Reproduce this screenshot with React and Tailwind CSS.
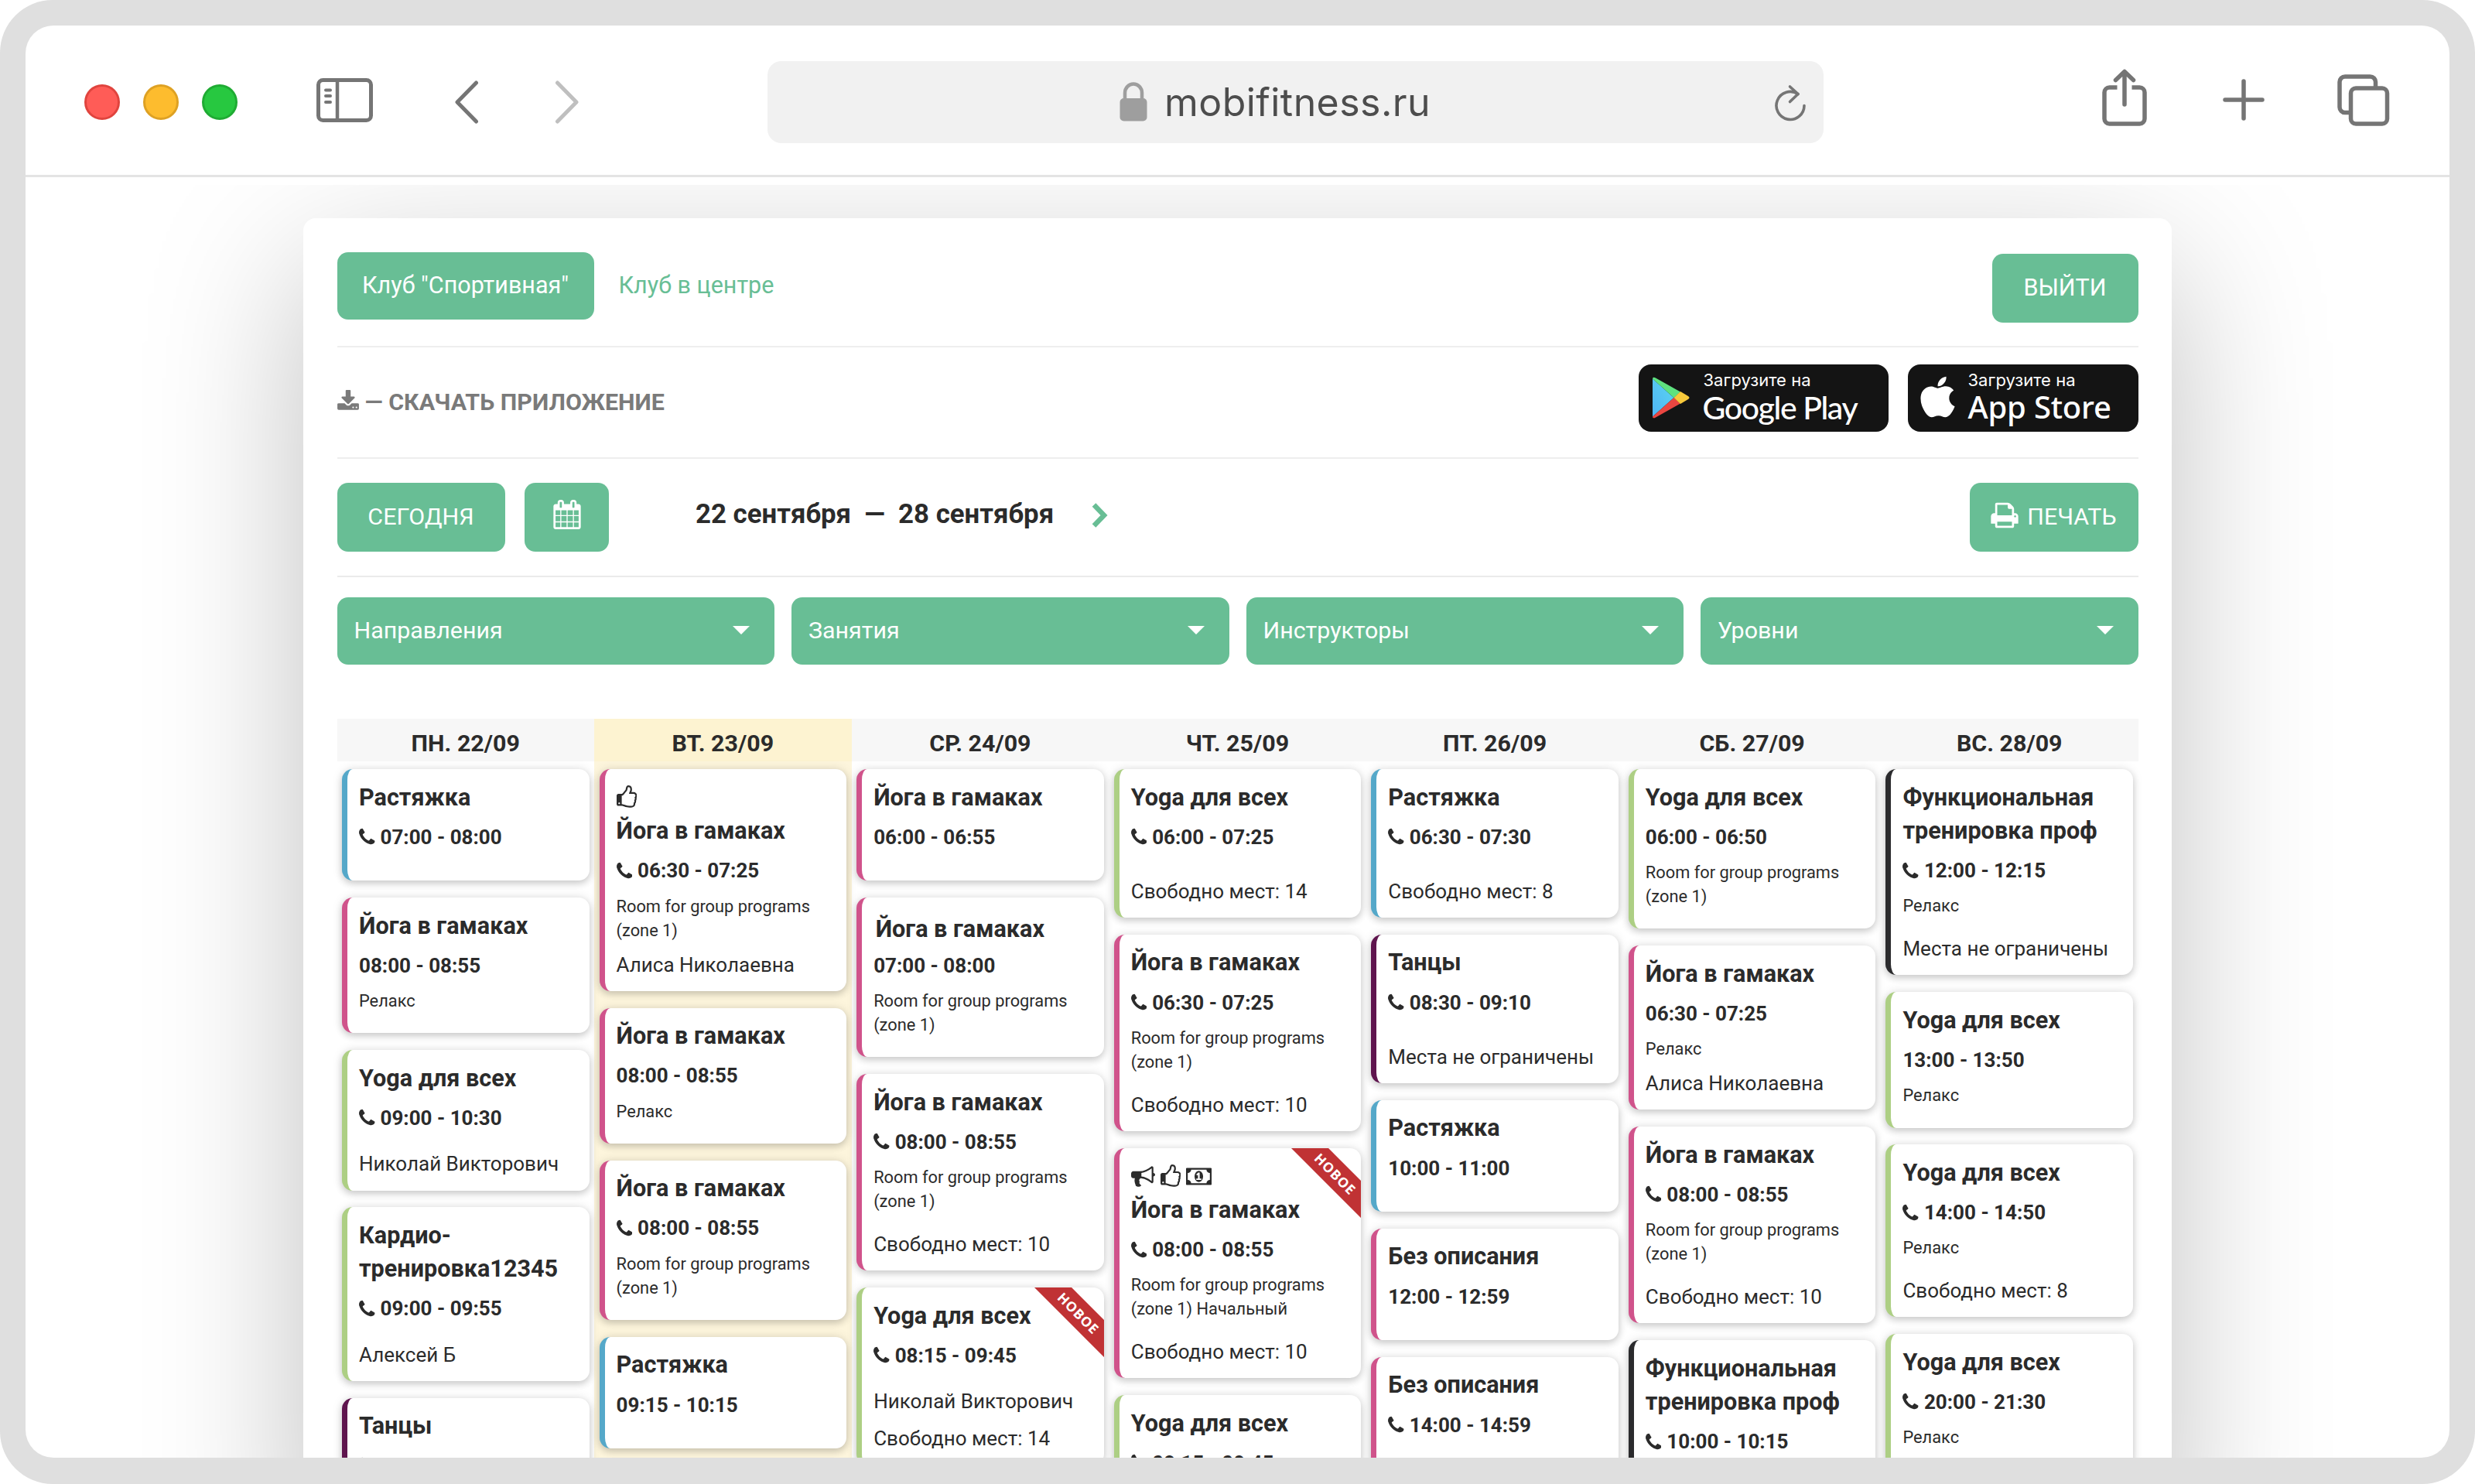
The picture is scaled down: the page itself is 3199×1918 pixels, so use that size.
import { FaApple } from "react-icons/fa";

const FONT = "font-['Roboto','Liberation_Sans',sans-serif]";

const ACCENTS = {
  blue: "border-[#55a8c9]",
  pink: "border-[#d0538b]",
  green: "border-[#adcf84]",
  plum: "border-[#5f154e]",
  dark: "border-[#2b2b2d]",
};

const ROOM = "Room for group programs (zone 1)";

const days = [
  {
    label: "ПН. 22/09",
    items: [
      { accent: "blue", title: "Растяжка", phone: true, time: "07:00 - 08:00" },
      { accent: "pink", title: "Йога в гамаках", time: "08:00 - 08:55", room: "Релакс" },
      { accent: "green", title: "Yoga для всех", phone: true, time: "09:00 - 10:30", coach: "Николай Викторович" },
      { accent: "green", title: "Кардио-тренировка12345", phone: true, time: "09:00 - 09:55", coach: "Алексей Б" },
      { accent: "plum", title: "Танцы", phone: true, time: "09:15 - 10:15" },
    ],
  },
  {
    label: "ВТ. 23/09",
    today: true,
    items: [
      { accent: "pink", icons: ["thumb"], title: "Йога в гамаках", phone: true, time: "06:30 - 07:25", room: ROOM, coach: "Алиса Николаевна" },
      { accent: "pink", title: "Йога в гамаках", time: "08:00 - 08:55", room: "Релакс" },
      { accent: "pink", title: "Йога в гамаках", phone: true, time: "08:00 - 08:55", room: ROOM },
      { accent: "blue", title: "Растяжка", time: "09:15 - 10:15" },
    ],
  },
  {
    label: "СР. 24/09",
    items: [
      { accent: "pink", title: "Йога в гамаках", time: "06:00 - 06:55" },
      { accent: "pink", title: "Йога в гамаках", shifted: true, time: "07:00 - 08:00", room: ROOM },
      { accent: "pink", title: "Йога в гамаках", phone: true, time: "08:00 - 08:55", room: ROOM, seats: "Свободно мест: 10" },
      { accent: "green", title: "Yoga для всех", isNew: true, phone: true, time: "08:15 - 09:45", coach: "Николай Викторович", seats: "Свободно мест: 14" },
    ],
  },
  {
    label: "ЧТ. 25/09",
    items: [
      { accent: "green", title: "Yoga для всех", phone: true, time: "06:00 - 07:25", seats: "Свободно мест: 14" },
      { accent: "pink", title: "Йога в гамаках", phone: true, time: "06:30 - 07:25", room: ROOM, seats: "Свободно мест: 10" },
      { accent: "pink", icons: ["horn", "thumb", "money"], title: "Йога в гамаках", isNew: true, phone: true, time: "08:00 - 08:55", room: `${ROOM} Начальный`, seats: "Свободно мест: 10" },
      { accent: "green", title: "Yoga для всех", phone: true, time: "08:15 - 09:45" },
    ],
  },
  {
    label: "ПТ. 26/09",
    items: [
      { accent: "blue", title: "Растяжка", phone: true, time: "06:30 - 07:30", seats: "Свободно мест: 8" },
      { accent: "plum", title: "Танцы", phone: true, time: "08:30 - 09:10", seats: "Места не ограничены" },
      { accent: "blue", title: "Растяжка", time: "10:00 - 11:00" },
      { accent: "pink", title: "Без описания", time: "12:00 - 12:59" },
      { accent: "pink", title: "Без описания", phone: true, time: "14:00 - 14:59" },
    ],
  },
  {
    label: "СБ. 27/09",
    items: [
      { accent: "green", title: "Yoga для всех", time: "06:00 - 06:50", room: ROOM },
      { accent: "pink", title: "Йога в гамаках", time: "06:30 - 07:25", room: "Релакс", coach: "Алиса Николаевна" },
      { accent: "pink", title: "Йога в гамаках", phone: true, time: "08:00 - 08:55", room: ROOM, seats: "Свободно мест: 10" },
      { accent: "dark", title: "Функциональная тренировка проф", phone: true, time: "10:00 - 10:15" },
    ],
  },
  {
    label: "ВС. 28/09",
    items: [
      { accent: "dark", title: "Функциональная тренировка проф", phone: true, time: "12:00 - 12:15", room: "Релакс", seats: "Места не ограничены" },
      { accent: "green", title: "Yoga для всех", time: "13:00 - 13:50", room: "Релакс" },
      { accent: "green", title: "Yoga для всех", phone: true, time: "14:00 - 14:50", room: "Релакс", seats: "Свободно мест: 8" },
      { accent: "green", title: "Yoga для всех", phone: true, time: "20:00 - 21:30", room: "Релакс" },
    ],
  },
];

const filters = ["Направления", "Занятия", "Инструкторы", "Уровни"];

/* ---------- Glyphs ---------- */

const Phone = () => (
  <svg className="h-[26px] w-[20.5px] shrink-0" viewBox="192 0 1408 1792" fill="currentColor">
    <path d="M1600 1240q0 27-10 70.5t-21 68.5q-21 50-122 106-94 51-186 51-27 0-53-3.5t-57.5-12.5-47-14.5-55.5-20.5-49-18q-98-35-175-83-127-79-264-216t-216-264q-48-77-83-175-3-9-18-49t-20.5-55.5-14.5-47-12.5-57.5-3.5-53q0-92 51-186 56-101 106-122 25-11 68.5-21t70.5-10q14 0 21 3 18 6 53 76 11 19 30 54t35 63.5 31 53.5q3 4 17.5 25t21.5 35.5 7 28.5q0 20-28.5 50t-62 55-62 53-28.5 46q0 9 5 22.5t8.5 20.5 14 24 11.5 19q76 137 174 235t235 174q2 1 19 11.5t24 14 20.5 8.5 22.5 5q18 0 46-28.5t53-62 55-62 50-28.5q14 0 28.5 7t35.5 21.5 25 17.5q25 15 53.5 31t63.5 35 54 30q70 35 76 53 3 7 3 21z" />
  </svg>
);

const Thumb = () => (
  <svg className="h-[31px] w-[26.5px]" viewBox="0 0 1536 1792" fill="currentColor">
    <path d="M256 1344q0-26-19-45t-45-19-45 19-19 45 19 45 45 19 45-19 19-45zm1152-576q0-51-39-89.5t-89-38.5h-352q0-58 48-159.5t48-160.5q0-98-32-145t-128-47q-26 26-38 85t-30.5 125.5-59.5 109.5q-22 23-77 91-4 5-23 30t-31.5 41-34.5 42.5-40 44-38.5 35.5-40 27-35.5 9h-32v640h32q13 0 31.5 3t33 6.5 38 11 35 11.5 35.5 12.5 29 10.5q211 73 342 73h121q192 0 192-167 0-26-5-56 30-16 47.5-52.5t17.5-73.5-18-69q53-50 53-119 0-25-10-55.5t-25-47.5q32-1 53.5-47t21.5-81zm128-1q0 89-49 163 9 33 9 69 0 77-38 144 3 21 3 43 0 101-60 178 1 139-85 219.5t-227 80.5h-129q-96 0-189.5-22.5t-216.5-65.5q-116-40-138-40h-288q-53 0-90.5-37.5t-37.5-90.5v-640q0-53 37.5-90.5t90.5-37.5h274q36-24 137-155 58-75 107-128 24-25 35.5-85.5t30.5-126.5 62-108q39-37 90-37 84 0 151 32.5t102 101.5 35 186q0 93-48 192h176q104 0 180 76t76 179z" />
  </svg>
);

const Horn = () => (
  <svg className="h-[31px] w-[31px]" viewBox="0 0 1792 1792" fill="currentColor">
    <path d="M1664 640q53 0 90.5 37.5t37.5 90.5-37.5 90.5-90.5 37.5v384q0 52-38 90t-90 38q-417-347-812-380-58 19-91 66t-31 100.5 40 92.5q-20 33-23 65.5t6 58 33.5 55 48 50 61.5 50.5q-29 58-111.5 83t-168.5 11.5-132-55.5q-7-23-29.5-87.5t-32-94.5-23-89-15-101 3.5-98.5 22-110.5h-122q-66 0-113-47t-47-113v-192q0-66 47-113t113-47h480q435 0 896-384 52 0 90 38t38 90v384zm-128 604v-954q-394 302-768 343v270q377 42 768 341z" />
  </svg>
);

const Money = () => (
  <svg className="h-[31px] w-[33px]" viewBox="0 0 1920 1792" fill="currentColor">
    <path d="M768 1152h384v-96h-128v-448h-114l-148 137 77 80q42-37 55-57h2v288h-128v96zm512-256q0 70-21 142t-59.5 134-101.5 101-138 39-138-39-101.5-101-59.5-134-21-142 21-142 59.5-134 101.5-101 138-39 138 39 101.5 101 59.5 134 21 142zm512 256v-512q-106 0-181-75t-75-181h-1152q0 106-75 181t-181 75v512q106 0 181 75t75 181h1152q0-106 75-181t181-75zm128-832v1152q0 26-19 45t-45 19h-1792q-26 0-45-19t-19-45v-1152q0-26 19-45t45-19h1792q26 0 45 19t19 45z" />
  </svg>
);

const Download = () => (
  <svg className="h-[30px] w-[28px]" viewBox="64 0 1664 1792" fill="currentColor">
    <path d="M1344 1344q0-26-19-45t-45-19-45 19-19 45 19 45 45 19 45-19 19-45zm256 0q0-26-19-45t-45-19-45 19-19 45 19 45 45 19 45-19 19-45zm128-224v320q0 40-28 68t-68 28h-1472q-40 0-68-28t-28-68v-320q0-40 28-68t68-28h465l135 136q58 56 136 56t136-56l136-136h464q40 0 68 28t28 68zm-325-569q17 41-14 70l-448 448q-18 19-45 19t-45-19l-448-448q-31-29-14-70 17-39 59-39h256v-448q0-26 19-45t45-19h256q26 0 45 19t19 45v448h256q42 0 59 39z" />
  </svg>
);

const CalendarGrid = () => (
  <svg className="mb-[7px] h-[38px] w-[38px]" viewBox="0 0 1792 1792" fill="currentColor">
    <path d="M192 1664h288v-288h-288v288zm352 0h320v-288h-320v288zm-352-352h288v-320h-288v320zm352 0h320v-320h-320v320zm-352-384h288v-288h-288v288zm736 736h320v-288h-320v288zm-384-736h320v-288h-320v288zm768 736h288v-288h-288v288zm-384-352h320v-320h-320v320zm-352-864v-288q0-13-9.5-22.5t-22.5-9.5h-64q-13 0-22.5 9.5t-9.5 22.5v288q0 13 9.5 22.5t22.5 9.5h64q13 0 22.5-9.5t9.5-22.5zm736 864h288v-320h-288v320zm-384-384h320v-288h-320v288zm384 0h288v-288h-288v288zm32-480v-288q0-13-9.5-22.5t-22.5-9.5h-64q-13 0-22.5 9.5t-9.5 22.5v288q0 13 9.5 22.5t22.5 9.5h64q13 0 22.5-9.5t9.5-22.5zm384-64v1280q0 52-38 90t-90 38h-1408q-52 0-90-38t-38-90v-1280q0-52 38-90t90-38h128v-96q0-66 47-113t113-47h64q66 0 113 47t47 113v96h384v-96q0-66 47-113t113-47h64q66 0 113 47t47 113v96h128q52 0 90 38t38 90z" />
  </svg>
);

const Printer = () => (
  <svg className="mb-[5px] h-[38px] w-[36px]" viewBox="64 0 1664 1792" fill="currentColor">
    <path d="M448 1536h896v-256h-896v256zm0-640h896v-384h-160q-40 0-68-28t-28-68v-160h-640v640zm1152 64q0-26-19-45t-45-19-45 19-19 45 19 45 45 19 45-19 19-45zm128 0v416q0 13-9.5 22.5t-22.5 9.5h-224v160q0 40-28 68t-68 28h-960q-40 0-68-28t-28-68v-160h-224q-13 0-22.5-9.5t-9.5-22.5v-416q0-79 56.5-135.5t135.5-56.5h64v-544q0-40 28-68t68-28h672q40 0 88 20t76 48l152 152q28 28 48 76t20 88v256h64q79 0 135.5 56.5t56.5 135.5z" />
  </svg>
);

const GLYPHS = { thumb: Thumb, horn: Horn, money: Money };

/* ---------- Browser toolbar ---------- */

const Toolbar = () => (
  <div className="flex h-[196px] shrink-0 items-center border-b-[3px] border-[#e4e4e4] pt-[4px] pl-[76px] text-[#757575]">
    <div className="flex gap-[30px]">
      <span className="h-[46px] w-[46px] rounded-full border-[3px] border-[#e0443e] bg-[#ff5c57]" />
      <span className="h-[46px] w-[46px] rounded-full border-[3px] border-[#dea123] bg-[#fdbc2e]" />
      <span className="h-[46px] w-[46px] rounded-full border-[3px] border-[#1fab33] bg-[#27c840]" />
    </div>

    <svg className="mb-[5px] ml-[102px] h-[57px] w-[73px]" viewBox="0 0 73 57" fill="none" stroke="currentColor" strokeWidth="5">
      <rect x="2.5" y="2.5" width="68" height="52" rx="6" />
      <path d="M27 3v51" strokeWidth="4.5" />
      <path d="M12 15.5h6M12 23h6M12 31h6" strokeWidth="4" strokeLinecap="round" />
    </svg>

    <svg className="ml-[105px] h-[56px] w-[32px]" viewBox="0 0 32 56" fill="none" stroke="currentColor" strokeWidth="5" strokeLinecap="round" strokeLinejoin="round">
      <path d="M28.5 3L4 28l24.5 25" />
    </svg>
    <svg className="ml-[98px] h-[56px] w-[32px] text-[#bfbfbf]" viewBox="0 0 32 56" fill="none" stroke="currentColor" strokeWidth="5" strokeLinecap="round" strokeLinejoin="round">
      <path d="M3.5 3L28 28L3.5 53" />
    </svg>

    <div className="ml-[243px] flex h-[106px] w-[1365px] items-center rounded-[18px] bg-[#f1f1f1] pr-[22px] pl-[455px]">
      <svg className="h-[51px] w-[36px] text-[#9e9e9e]" viewBox="0 0 36 51">
        <rect x="0.5" y="21" width="35" height="29.5" rx="5" fill="currentColor" />
        <path d="M7 23V14a11 11.5 0 0 1 22 0v9" fill="none" stroke="currentColor" strokeWidth="4.5" />
      </svg>
      <span className="ml-[22px] flex-1 pt-[1px] font-['Inter',sans-serif] text-[50px] leading-none tracking-[0.45px] text-[#4d4d4d]">mobifitness.ru</span>
      <svg className="mt-[4px] h-[50px] w-[42px]" viewBox="0 0 42 50" fill="none" stroke="currentColor" strokeWidth="3.6" strokeLinecap="round" strokeLinejoin="round">
        <path d="M39 27.5A18 18 0 1 1 31 12.5" />
        <path d="M20.5 3L31 12.5L20.5 22.5" />
      </svg>
    </div>

    <svg className="mb-[12px] ml-[360px] h-[74px] w-[58px]" viewBox="0 0 58 74" fill="none" stroke="currentColor" strokeWidth="5.5">
      <path d="M19.5 24H9.5a6.5 6.5 0 0 0-6.5 6.5v34a6.5 6.5 0 0 0 6.5 6.5h39a6.5 6.5 0 0 0 6.5-6.5v-34a6.5 6.5 0 0 0-6.5-6.5H38.5" />
      <path d="M29 46V4M17.5 14.5L29 3.5L40.5 14.5" strokeLinecap="round" strokeLinejoin="round" />
    </svg>
    <svg className="mb-[5px] ml-[98px] h-[54px] w-[54px]" viewBox="0 0 54 54" stroke="currentColor" strokeWidth="5.5" strokeLinecap="round">
      <path d="M27 3v48M3 27h48" />
    </svg>
    <svg className="mb-[4px] ml-[94px] h-[67px] w-[68px]" viewBox="0 0 68 67" fill="none" stroke="currentColor" strokeWidth="5.5">
      <path d="M17 49.5H10a7 7 0 0 1-7-7V10a7 7 0 0 1 7-7h32.5a7 7 0 0 1 7 7v7.5" />
      <rect x="17.5" y="18" width="47" height="46" rx="6.5" />
    </svg>
  </div>
);

/* ---------- Schedule ---------- */

const Ribbon = () => (
  <div className="absolute top-0 right-0 h-[90px] w-[90px] overflow-hidden">
    <div className="absolute top-[16px] left-[-23px] flex h-[34px] w-[160px] rotate-45 items-center justify-center bg-[#c03234] font-['Open_Sans',sans-serif] text-[17.5px] font-bold tracking-[0.8px] text-white">
      НОВОЕ
    </div>
  </div>
);

const ClassCard = ({ item }) => (
  <div className={`relative rounded-[14px] border-l-[7px] bg-white pt-[14.5px] pl-[15px] text-[#2b2b2b] shadow-[0_4px_10px_rgba(0,0,0,0.16),0_0_14px_rgba(0,0,0,0.11)] ${ACCENTS[item.accent]}`}>
    {item.isNew && <Ribbon />}
    {item.icons && (
      <div className="flex h-[43.5px] items-center gap-[7px]">
        {item.icons.map((name) => {
          const Glyph = GLYPHS[name];
          return <Glyph key={name} />;
        })}
      </div>
    )}
    <h3 className={`text-[30.6px] leading-[43.3px] font-bold ${item.shifted ? "-mb-[4px] pt-[4px] pl-[2.5px]" : ""}`}>{item.title}</h3>
    <div className="mt-[10.5px] flex h-[40px] items-center gap-[7px] text-[26px] font-bold">
      {item.phone && <Phone />}
      {item.time}
    </div>
    <p className="mt-[9.8px] pr-[30px] text-[21.8px] leading-[31px]">{item.room}</p>
    <div className="pt-[11px] pb-[15.3px] text-[26px] leading-[37px]">
      {item.coach && <p>{item.coach}</p>}
      {item.seats && <p className="pt-[10.8px]">{item.seats}</p>}
    </div>
  </div>
);

const DayColumn = ({ day }) => (
  <div className={`pb-[40px] ${day.today ? "bg-[#fdf5dc]" : ""}`}>
    <div className={`flex h-[55px] items-center justify-center pt-[8px] text-[30.4px] font-bold text-[#2b2b2b] ${day.today ? "bg-[#fdf3d1]" : "bg-[#f7f7f7]"}`}>
      {day.label}
    </div>
    <div className="flex flex-col gap-[21.7px] px-[6.5px] pt-[10px]">
      {day.items.map((item, i) => (
        <ClassCard key={i} item={item} />
      ))}
    </div>
  </div>
);

/* ---------- Store badges ---------- */

const StoreBadges = () => (
  <div className="flex gap-[25px] text-white">
    <div className="flex h-[87px] w-[323px] rounded-[16px] bg-[#141414] pl-[18px]">
      <svg className="mt-[16px] h-[54px] w-[48px]" viewBox="0 0 48 54">
        <defs>
          <linearGradient id="play" x1="1" y1="0" x2="0" y2="1">
            <stop offset="0" stopColor="#5bd6f0" />
            <stop offset="1" stopColor="#4fb4f5" />
          </linearGradient>
        </defs>
        <path d="M0 2.5V51.5L27.5 27z" fill="url(#play)" />
        <path d="M0 2.5C0 .5 2 0 4 1.5L36 19.5L27.5 27z" fill="#5fe27f" />
        <path d="M0 51.5C0 53.5 2 54 4 52.5L36 34.5L27.5 27z" fill="#ea4641" />
        <path d="M36 19L46 25Q49 27 46 29L36 35L27.5 27z" fill="#f8c93b" />
      </svg>
      <div className="ml-[18px] pt-[7px]">
        <p className="font-['Inter',sans-serif] text-[22px] leading-[27px]">Загрузите на</p>
        <p className="-ml-[1px] font-['Lato',sans-serif] text-[41px] leading-[43px] font-medium tracking-[-1.4px]">Google Play</p>
      </div>
    </div>
    <div className="flex h-[87px] w-[298px] rounded-[16px] bg-[#141414] pl-[16px]">
      <FaApple className="mt-[12px] h-[60px] w-[45px]" />
      <div className="ml-[17px] pt-[7px]">
        <p className="font-['Inter',sans-serif] text-[22px] leading-[27px]">Загрузите на</p>
        <p className="font-['Noto_Sans',sans-serif] text-[40px] leading-[42px] font-medium tracking-[-0.2px]">App Store</p>
      </div>
    </div>
  </div>
);

const App = () => (
  <div className="h-[1918px] w-full bg-white">
    <div className="h-[1918px] w-full rounded-[68px] bg-[#dfdfdf] px-[33px] pt-[33px] pb-[34px]">
      <div className={`flex h-full flex-col overflow-hidden rounded-[36px] bg-white ${FONT}`}>
        <Toolbar />

        <div className="mt-[10px] flex-1 overflow-hidden">
          <div className="mx-auto mt-[43px] w-[2415px] rounded-[16px] bg-white px-[43.5px] pt-[44px] shadow-[0_64px_200px_rgba(0,0,0,0.25)]">
            {/* Clubs */}
            <div className="flex h-[123px] items-start border-b-2 border-[#eeeeee] text-[30.5px]">
              <button className="h-[87px] w-[332px] rounded-[14px] bg-[#68be95] pb-[1px] text-white">Клуб "Спортивная"</button>
              <span className="ml-[32px] leading-[86px] text-[#68be95]">Клуб в центре</span>
              <button className="mt-[2px] ml-auto h-[89px] w-[189px] rounded-[14px] bg-[#68be95] pb-[1px] text-white">ВЫЙТИ</button>
            </div>

            {/* App links */}
            <div className="flex h-[144px] items-center justify-between border-b-2 border-[#eeeeee] pb-[12px] text-[#7a7a7a]">
              <div className="flex items-center gap-[8px] pt-[11px] text-[30.4px] font-bold">
                <Download />
                — СКАЧАТЬ ПРИЛОЖЕНИЕ
              </div>
              <StoreBadges />
            </div>

            {/* Week switcher */}
            <div className="flex h-[153px] items-center border-b-2 border-[#ebebeb] text-[30.4px] text-white">
              <button className="h-[89px] w-[217px] rounded-[14px] bg-[#68be95] pb-[1px]">СЕГОДНЯ</button>
              <button className="ml-[25.5px] flex h-[89px] w-[109px] items-center justify-center rounded-[14px] bg-[#68be95]">
                <CalendarGrid />
              </button>
              <div className="mb-[8px] ml-[112px] text-[34.8px] font-bold whitespace-pre text-[#2b2b2b]">22 сентября  —  28 сентября</div>
              <svg className="mb-[6px] ml-[49px] h-[32px] w-[22px]" viewBox="0 0 22 32" fill="none" stroke="#68be95" strokeWidth="6.5">
                <path d="M3 2.5L16 16L3 29.5" />
              </svg>
              <button className="ml-auto flex h-[89px] w-[218px] items-center justify-center gap-[11px] rounded-[14px] bg-[#68be95] pb-[1px]">
                <Printer />
                ПЕЧАТЬ
              </button>
            </div>

            {/* Filters */}
            <div className="mt-[26px] grid grid-cols-4 gap-[22px] text-[30.4px] text-white">
              {filters.map((name) => (
                <button key={name} className="flex h-[87px] items-center justify-between rounded-[14px] bg-[#68be95] pr-[32px] pb-[2px] pl-[22px]">
                  {name}
                  <svg className="h-[11px] w-[22px]" viewBox="0 0 22 11" fill="currentColor">
                    <path d="M0 0h22L11 11z" />
                  </svg>
                </button>
              ))}
            </div>

            {/* Timetable */}
            <div className="mt-[70px] grid grid-cols-7">
              {days.map((day) => (
                <DayColumn key={day.label} day={day} />
              ))}
            </div>
          </div>
        </div>
      </div>
    </div>
  </div>
);

export default App;
